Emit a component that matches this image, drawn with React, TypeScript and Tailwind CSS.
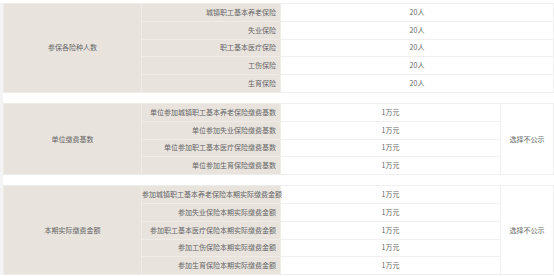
const rows1 = ['城镇职工基本养老保险', '失业保险', '职工基本医疗保险', '工伤保险', '生育保险'];
const rows2 = [
  '单位参加城镇职工基本养老保险缴费基数',
  '单位参加失业保险缴费基数',
  '单位参加职工基本医疗保险缴费基数',
  '单位参加生育保险缴费基数',
];
const rows3 = [
  '参加城镇职工基本养老保险本期实际缴费金额',
  '参加失业保险本期实际缴费金额',
  '参加职工基本医疗保险本期实际缴费金额',
  '参加工伤保险本期实际缴费金额',
  '参加生育保险本期实际缴费金额',
];

const label = 'bg-[#e8e3dd] border border-[#efebe6] text-[#666] p-0 whitespace-nowrap';
const cell = 'bg-white border border-[#f0f0f0] text-[#666] p-0 text-center whitespace-nowrap';

function Section({
  title,
  items,
  value,
  note,
}: {
  title: string;
  items: string[];
  value: string;
  note?: string;
}) {
  return (
    <table className="w-[551px] border-collapse table-fixed text-[7px] leading-none">
      <colgroup>
        <col className="w-[138px]" />
        <col className="w-[139px]" />
        <col className="w-[220px]" />
        <col />
      </colgroup>
      <tbody>
        {items.map((item, i) => (
          <tr key={item} className="h-[17.8px]">
            {i === 0 && (
              <td rowSpan={items.length} className={`${label} text-center`}>
                {title}
              </td>
            )}
            <td className={`${label} text-right pr-[4px] overflow-visible`}>{item}</td>
            <td className={cell} colSpan={note ? 1 : 2}>
              {value}
            </td>
            {note && i === 0 && (
              <td rowSpan={items.length} className={cell}>
                {note}
              </td>
            )}
          </tr>
        ))}
      </tbody>
    </table>
  );
}

export default function App() {
  return (
    <div
      className="w-[554px] h-[276px] overflow-hidden bg-white pt-[3px]"
      style={{ fontFamily: '"Noto Sans CJK SC", "Noto Sans", sans-serif' }}
    >
      <div className="border-l-[3px] border-[#f4f4f4] flex flex-col gap-[10px]">
        <Section title="参保各险种人数" items={rows1} value="20人" />
        <Section title="单位缴费基数" items={rows2} value="1万元" note="选择不公示" />
        <Section title="本期实际缴费金额" items={rows3} value="1万元" note="选择不公示" />
      </div>
    </div>
  );
}
